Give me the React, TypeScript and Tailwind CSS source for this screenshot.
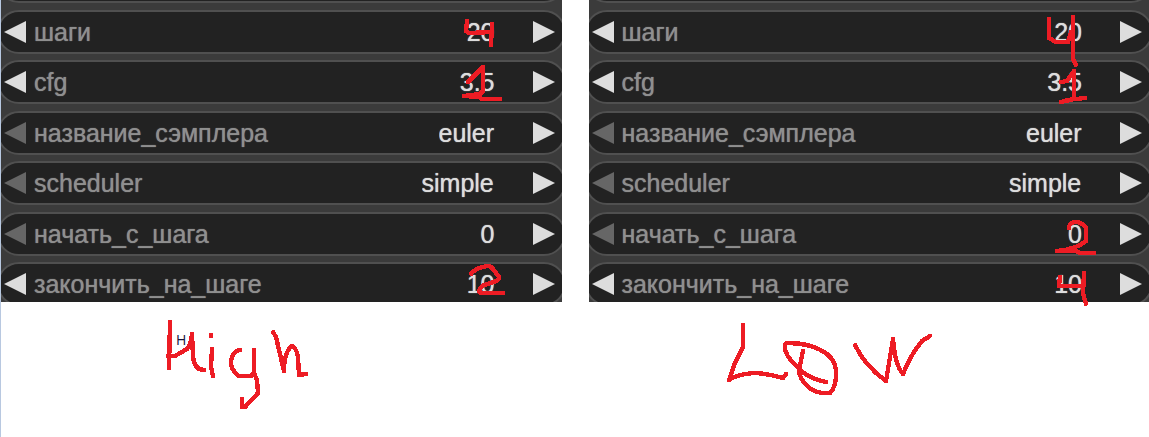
import { useState } from "react";
import clsx from "clsx";

type Widget = {
    name: string;
    value: string;
    kind: "number" | "combo";
    atStart?: boolean;
};

type Sampler = {
    id: string;
    title: string;
    valueInk: string[];
    valueInkBox: string;
    titleInk: string[];
    titleInkBox: string;
};

const WIDGETS: Widget[] = [
    { name: "шаги", value: "20", kind: "number" },
    { name: "cfg", value: "3.5", kind: "number" },
    { name: "название_сэмплера", value: "euler", kind: "combo", atStart: true },
    { name: "scheduler", value: "simple", kind: "combo", atStart: true },
    { name: "начать_с_шага", value: "0", kind: "number", atStart: true },
    { name: "закончить_на_шаге", value: "10", kind: "number" },
];

const SAMPLERS: Sampler[] = [
    {
        id: "high",
        title: "High",
        valueInkBox: "442 0 120 310",
        valueInk: [
            "M467 21 L466 31 L469 33 L492 32",
            "M492 24 L491 45",
            "M468 82 L483 67 L483 91 L480 94 L464 96 L479 97 L482 99 L500 99",
            "M471 274 Q475 268 487 266 Q491 266 493 269 L499 277 Q500 281 487 284 Q480 286 479 291 L481 293 L503 293",
        ],
        titleInkBox: "161 302 160 120",
        titleInk: [
            "M170 322 L169 368",
            "M168 356 L175 356 L187 349 Q191 345 192 334 L193 356 Q194 370 204 370",
            "M211 335 L211 336",
            "M212 349 L211 367 L213 376",
            "M240 350 Q234 350 231 360 Q230 370 239 376 L251 376 L254 373 L254 350",
            "M254 373 L257 380 L258 393 L245 407 L242 407 L242 399",
            "M273 332 L276 337 L284 371 Q284 352 292 346 Q296 347 298 357 L299 375 L306 374",
        ],
    },
    {
        id: "low",
        title: "Low",
        valueInkBox: "1029 0 120 310",
        valueInk: [
            "M1049 19 L1049 38 L1056 42 L1068 42 L1071 32",
            "M1073 17 L1073 59 L1076 65",
            "M1061 82 L1067 81 L1074 71 L1074 99 L1061 102",
            "M1067 100 L1085 98",
            "M1069 228 Q1069 223 1075 222 Q1082 222 1086 228 L1086 241 Q1077 249 1057 251 L1076 251 L1080 253 L1094 253",
            "M1060 277 L1059 286 L1082 286",
            "M1084 273 L1083 293 L1086 304",
        ],
        titleInkBox: "721 302 240 120",
        titleInk: [
            "M743 325 L743 347 L735 363 L729 380 Q735 375 753 373 Q765 373 783 378 L786 374",
            "M803 351 L799 370 Q799 380 811 389 Q819 394 830 393 Q836 387 836 375 Q837 362 827 354 Q812 343 788 343 Q784 343 785 350 Q788 360 804 373 Q812 379 826 382",
            "M855 345 Q865 366 886 381 L893 339 Q895 365 903 374 Q911 354 922 341 L930 336",
        ],
    },
];

function Ink({ box, strokes, className }: { box: string; strokes: string[]; className: string }) {
    return (
        <svg
            viewBox={box}
            className={clsx("overflow-visible fill-none stroke-[#ed1c24]", className)}
            strokeWidth="4.4"
            strokeLinecap="round"
            strokeLinejoin="round"
            shapeRendering="crispEdges"
            aria-hidden="true"
        >
            {strokes.map((d) => (
                <path key={d} d={d} />
            ))}
        </svg>
    );
}

function StepButton({ label, direction, disabled }: { label: string; direction: "left" | "right"; disabled?: boolean }) {
    return (
        <button
            type="button"
            aria-label={label}
            disabled={disabled}
            className="shrink-0 text-[#dddddd] disabled:text-[#666666]"
        >
            <svg viewBox="0 0 22 22" className="h-[22px] w-[22px] fill-current">
                <path d={direction === "left" ? "M0 11 L22 0 V22 Z" : "M22 11 L0 0 V22 Z"} />
            </svg>
        </button>
    );
}

function WidgetRow({ widget, prefix }: { widget: Widget; prefix: string }) {
    const [value, setValue] = useState(widget.value);
    const id = `${prefix}-${widget.name}`;

    return (
        <div className="flex h-11 shrink-0 items-center rounded-full border-2 border-[#505050] bg-[#222222] pr-[9px] pl-[5px] text-[25px] leading-8 [text-shadow:0_0_1px_currentColor]">
            <StepButton label={`${widget.name} −`} direction="left" disabled={widget.atStart} />
            <label htmlFor={id} className="ml-2 whitespace-nowrap text-[#8f8f8f]">
                {widget.name}
            </label>
            {widget.kind === "combo" ? (
                <select
                    id={id}
                    value={value}
                    onChange={(e) => setValue(e.target.value)}
                    className="ml-auto appearance-none text-[#dddddd] outline-none [text-shadow:0_0_1px_currentColor]"
                >
                    <option>{widget.value}</option>
                </select>
            ) : (
                <input
                    id={id}
                    inputMode="decimal"
                    value={value}
                    onChange={(e) => setValue(e.target.value)}
                    className="ml-auto w-20 text-right text-[#dddddd] outline-none [text-shadow:0_0_1px_currentColor]"
                />
            )}
            <div className="ml-[38px] flex">
                <StepButton label={`${widget.name} +`} direction="right" />
            </div>
        </div>
    );
}

function SamplerPanel({ sampler }: { sampler: Sampler }) {
    return (
        <section aria-label={sampler.title} className="relative min-w-0">
            <div className="h-[302px] overflow-hidden bg-[#3b3b3b]">
                {/* the node is cropped, so rows run past every edge */}
                <div className="-mt-[41px] -mr-1 -ml-1 flex h-[347px] flex-col justify-between">
                    <div className="h-11 shrink-0 rounded-full border-2 border-[#505050] bg-[#222222]" />
                    {WIDGETS.map((widget) => (
                        <WidgetRow key={widget.name} widget={widget} prefix={sampler.id} />
                    ))}
                </div>
            </div>
            <Ink
                box={sampler.valueInkBox}
                strokes={sampler.valueInk}
                className="pointer-events-none absolute top-0 right-0 h-[310px] w-[120px]"
            />
            {sampler.id === "high" ? (
                <div className="relative ml-40 w-40">
                    <Ink box={sampler.titleInkBox} strokes={sampler.titleInk} className="h-[120px] w-40" />
                    <span className="absolute top-7 left-[15px] font-['Open_Sans',sans-serif] text-sm leading-5 text-[#14143c]">
                        H
                    </span>
                </div>
            ) : (
                <Ink box={sampler.titleInkBox} strokes={sampler.titleInk} className="ml-[132px] h-[120px] w-60" />
            )}
        </section>
    );
}

export default function App() {
    return (
        <main className="grid min-h-screen grid-cols-2 gap-[27px] border-l border-[#b8c8e0] bg-white font-['Liberation_Sans',Arial,sans-serif]">
            {SAMPLERS.map((sampler) => (
                <SamplerPanel key={sampler.id} sampler={sampler} />
            ))}
        </main>
    );
}
